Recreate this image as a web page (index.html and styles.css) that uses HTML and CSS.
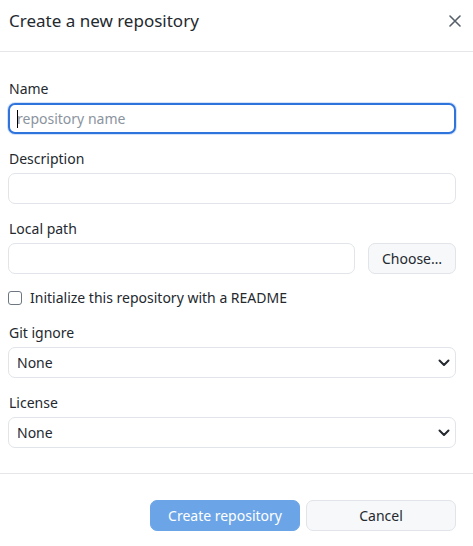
FILE: index.html
```html
<!DOCTYPE html>
<html lang="en">
<head>
<meta charset="utf-8">
<title>Create a new repository</title>
<link rel="stylesheet" href="styles.css">
</head>
<body>
<div class="dialog">
  <header class="dialog-header">
    <h1 class="dialog-title">Create a new repository</h1>
    <button class="close-btn" aria-label="Close">
      <svg width="12" height="12" viewBox="0 0 12 12"><path d="M1 1 L11 11 M11 1 L1 11" stroke="#57606a" stroke-width="1.6" stroke-linecap="round"/></svg>
    </button>
  </header>
  <form class="dialog-body">
    <div class="field">
      <label class="field-label">Name</label>
      <div class="input-wrap">
        <input class="text-input focused" type="text" placeholder="repository name">
        <span class="caret"></span>
      </div>
    </div>
    <div class="field">
      <label class="field-label">Description</label>
      <input class="text-input" type="text">
    </div>
    <div class="field">
      <label class="field-label">Local path</label>
      <div class="path-row">
        <input class="text-input path-input" type="text">
        <button type="button" class="btn choose-btn">Choose…</button>
      </div>
    </div>
    <label class="check-row">
      <span class="checkbox"></span>
      <span>Initialize this repository with a README</span>
    </label>
    <div class="field">
      <label class="field-label">Git ignore</label>
      <div class="select-wrap">
        <select class="select"><option>None</option></select>
        <svg class="chevron" width="12" height="8" viewBox="0 0 12 8"><path d="M1.5 1.5 L6 6 L10.5 1.5" fill="none" stroke="#24292f" stroke-width="2" stroke-linecap="round" stroke-linejoin="round"/></svg>
      </div>
    </div>
    <div class="field">
      <label class="field-label">License</label>
      <div class="select-wrap">
        <select class="select"><option>None</option></select>
        <svg class="chevron" width="12" height="8" viewBox="0 0 12 8"><path d="M1.5 1.5 L6 6 L10.5 1.5" fill="none" stroke="#24292f" stroke-width="2" stroke-linecap="round" stroke-linejoin="round"/></svg>
      </div>
    </div>
  </form>
  <footer class="dialog-footer">
    <button type="button" class="btn primary-btn">Create repository</button>
    <button type="button" class="btn cancel-btn">Cancel</button>
  </footer>
</div>
</body>
</html>
```
FILE: styles.css
```css
* { box-sizing: border-box; }
html, body {
  margin: 0;
  padding: 0;
  background: #ffffff;
}
body {
  font-family: "Noto Sans", "Open Sans", sans-serif;
  font-size: 14px;
  color: #24292f;
  width: 473px;
}
.dialog {
  display: flex;
  flex-direction: column;
}
.dialog-header {
  height: 52px;
  border-bottom: 1px solid #e4e6e9;
  display: flex;
  align-items: flex-start;
  justify-content: space-between;
  padding: 0 11px 0 9px;
}
.dialog-title {
  margin: 0;
  font-size: 17px;
  font-weight: 400;
  line-height: 20px;
  margin-top: 11px;
  color: #24292f;
}
.close-btn {
  border: 0;
  background: none;
  padding: 0;
  width: 14px;
  height: 14px;
  margin-top: 14px;
  display: flex;
  align-items: center;
  justify-content: center;
}
.dialog-body {
  margin: 0;
  padding: 27px 17px 0 8px;
  display: flex;
  flex-direction: column;
}
.field {
  display: flex;
  flex-direction: column;
  margin-bottom: 15px;
}
.field-label {
  line-height: 20px;
  margin-bottom: 4px;
  padding-left: 1px;
}
.input-wrap, .select-wrap {
  position: relative;
}
.text-input, .select {
  width: 100%;
  height: 31px;
  border: 1px solid #e1e4e8;
  border-radius: 7px;
  background: #ffffff;
  font-family: inherit;
  font-size: 14px;
  color: #24292f;
  padding: 0 8px;
  outline: none;
}
.text-input::placeholder {
  color: #8b949e;
}
.text-input.focused {
  border: 2px solid #2f74dc;
  padding-left: 7px;
  box-shadow: 0 0 0 1px rgba(47,116,220,0.2);
}
.caret {
  position: absolute;
  left: 9px;
  top: 7px;
  width: 1px;
  height: 18px;
  background: #000;
}
.path-row {
  display: flex;
  gap: 13px;
}
.path-input {
  flex: 1;
}
.btn {
  font-family: inherit;
  font-size: 14px;
  height: 31px;
  border-radius: 7px;
  cursor: pointer;
}
.choose-btn {
  width: 88px;
  flex: none;
  background: #f6f8fa;
  border: 1px solid #e1e4e8;
  color: #24292f;
  padding: 0;
}
.check-row {
  display: flex;
  align-items: center;
  gap: 8px;
  line-height: 20px;
  margin: -1px 0 15px;
}
.checkbox {
  width: 14px;
  height: 14px;
  border: 1px solid #6e7781;
  border-radius: 3px;
  background: #fff;
  flex: none;
}
.select {
  appearance: none;
  -webkit-appearance: none;
  padding-right: 30px;
}
.chevron {
  position: absolute;
  right: 6px;
  top: 12px;
  pointer-events: none;
}
.dialog-body .field:last-child {
  margin-bottom: 25px;
}
.dialog-footer {
  border-top: 1px solid #e4e6e9;
  display: flex;
  justify-content: flex-end;
  gap: 6px;
  padding: 26px 17px 0 0;
}
.primary-btn {
  width: 150px;
  background: #6ba5e7;
  border: 1px solid #6ba5e7;
  color: #ffffff;
}
.cancel-btn {
  width: 150px;
  background: #f6f8fa;
  border: 1px solid #e1e4e8;
  color: #24292f;
}
```
